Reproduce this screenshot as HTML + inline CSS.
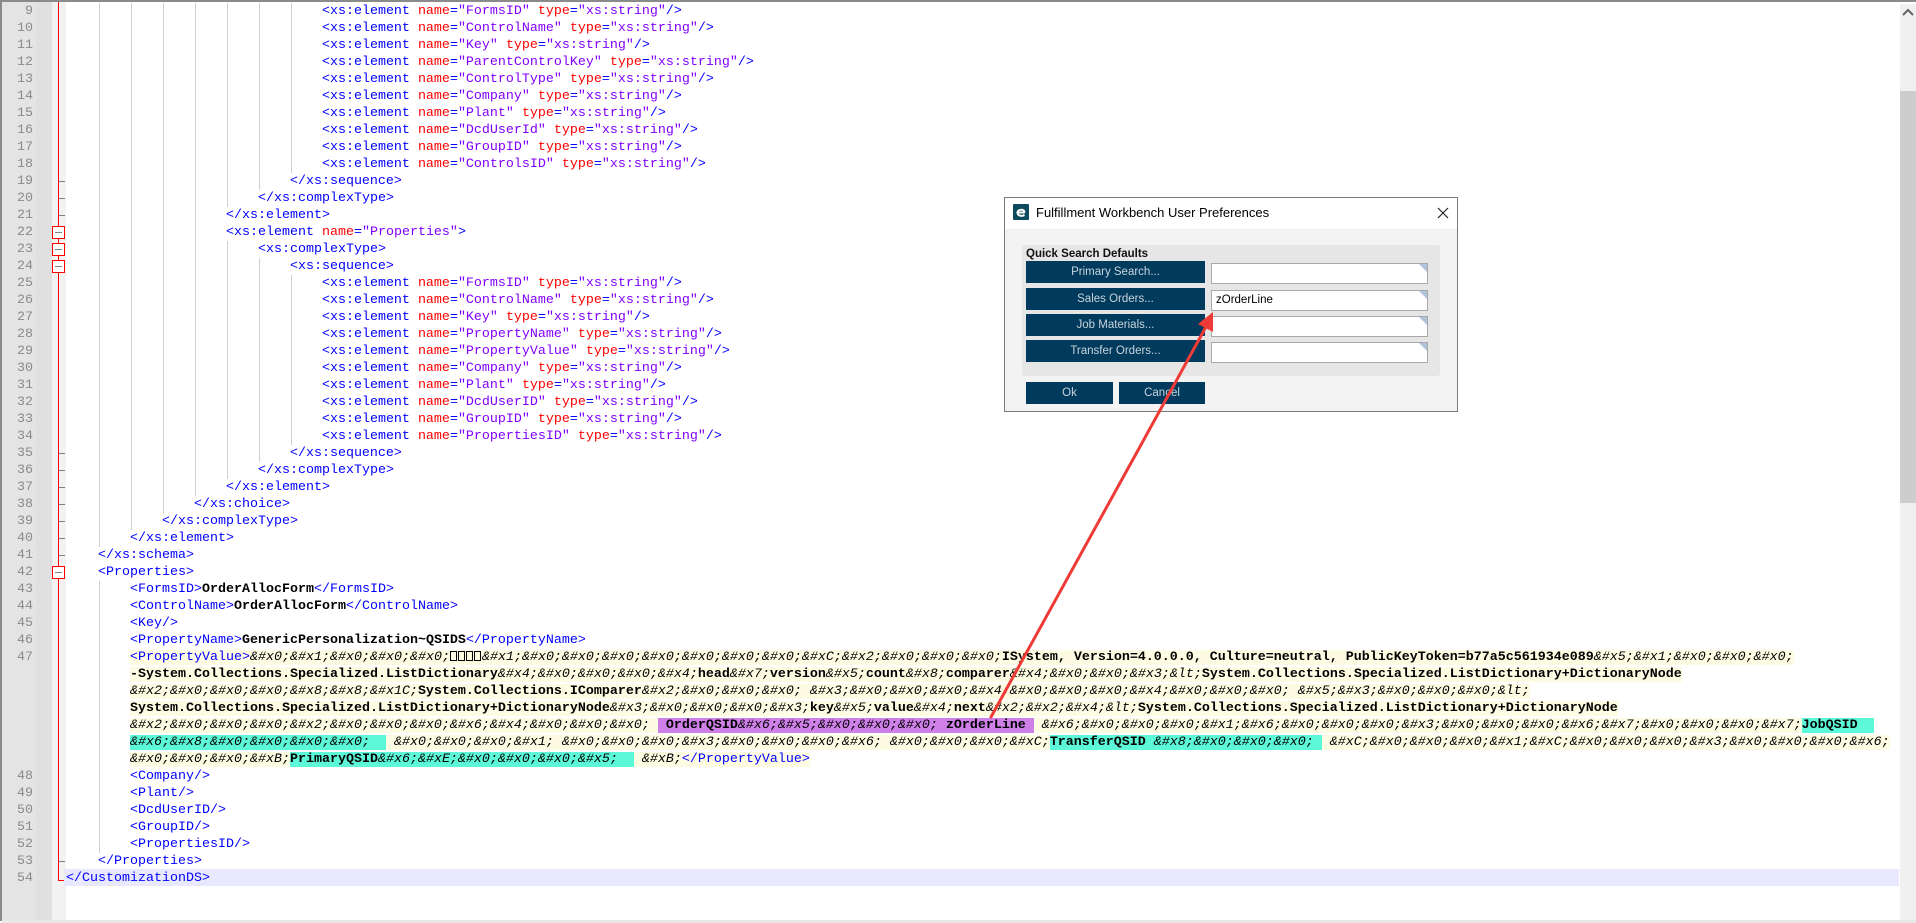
<!DOCTYPE html>
<html><head><meta charset="utf-8">
<style>
*{margin:0;padding:0;box-sizing:border-box}
html,body{width:1916px;height:921px;overflow:hidden;background:#fff}
#ed{position:absolute;left:0;top:0;width:1916px;height:921px;border-top:2px solid #8a8a8a;border-left:2px solid #8a8a8a;background:#fff}
.g1{position:absolute;left:0;top:0;width:34px;height:918px;background:#e4e4e4}
.g2{position:absolute;left:34px;top:0;width:16px;height:918px;background:#e0e0e0}
.g3{position:absolute;left:50px;top:0;width:14px;height:918px;background:#f2f2f2}
.bot{position:absolute;left:0;top:918px;width:1916px;height:3px;background:#e8e8e8}
.rl{position:absolute;left:56px;top:0;width:1px;height:879px;background:#f00}
.rlh{position:absolute;left:56px;top:878px;width:8px;height:1px;background:#f00}
.row{position:absolute;left:0;height:17px;width:1897px;font-family:"Liberation Mono",monospace;font-size:13.33px;line-height:17px;white-space:pre}
.ln{position:absolute;left:0;width:31px;text-align:right;color:#8a8a8a;font-family:"Liberation Mono",monospace}
.tx{position:absolute;left:64px;top:0}
.gd{position:absolute;left:96px;top:0;height:17px;background:repeating-linear-gradient(to right,#d0d0d0 0 1px,transparent 1px 32px);background-position:1px 0}
.tk{position:absolute;left:57px;top:8px;width:6px;height:1px;background:#808080}
.bx{position:absolute;left:50px;top:2px;width:13px;height:13px;border:1px solid #f00;background:#fff}
.bx:after{content:"";position:absolute;left:2px;top:5px;width:7px;height:1px;background:#808080}
.t{color:#0000ff}.a{color:#ff0000}.v{color:#8000ff}.b{color:#000;font-weight:bold}
.e{color:#000;font-style:italic}
.y{background:#fefbe3}
.p{background:#cf7fe8}.c{background:#5cf8d8}
.sq{display:inline-block;width:7px;height:10px;border:1px solid #000;margin-right:1px;vertical-align:-1px}
.sb{position:absolute;left:1898px;top:2px;width:16px;height:916px;background:#f0f0f0}
.th{position:absolute;left:1898px;top:89px;width:16px;height:412px;background:#cdcdcd}
.cur{background:#e8e8ff}
#dlg{position:absolute;left:1004px;top:197px;width:454px;height:215px;border:1px solid #7a7a7a;background:#f3f3f4;font-family:"Liberation Sans",sans-serif}
#tb{position:absolute;left:0;top:0;width:452px;height:31px;background:#fff}
#ic{position:absolute;left:8px;top:6px;width:16px;height:16px;background:#0d4a5e;border-radius:1px}
#tt{position:absolute;left:31px;top:7px;font-size:13px;color:#000}
#grp{position:absolute;left:17px;top:47px;width:418px;height:131px;background:#e6e6e6;border-radius:3px}
#gl{position:absolute;left:4px;top:3px;font-size:11.5px;font-weight:bold;color:#111}
.btn{position:absolute;height:22px;background:#003a5c;color:#c8d4dc;font-size:11.5px;text-align:center;line-height:22px}
.in{position:absolute;height:21px;width:217px;background:#fff;border:1px solid #a8a8a8;font-size:11.5px;line-height:19px;padding-left:4px;color:#000}
.in:after{content:"";position:absolute;right:0;top:0;border-top:8px solid #b0c4de;border-left:8px solid transparent}
</style></head><body>
<div id="ed">
<div class="g1"></div><div class="g2"></div><div class="g3"></div>
<div class="bot"></div>
<div class="rl"></div><div class="rlh"></div>
<div class="row cur" style="top:867px;left:62px;width:1835px;height:17px"></div>

<div class="row" style="top:1px"><span class="ln">9</span><span class="gd" style="width:224px"></span><span class="tx">                                <span class="t">&lt;xs:element </span><span class="a">name</span><span class="t">=</span><span class="v">"FormsID"</span> <span class="a">type</span><span class="t">=</span><span class="v">"xs:string"</span><span class="t">/&gt;</span></span></div>
<div class="row" style="top:18px"><span class="ln">10</span><span class="gd" style="width:224px"></span><span class="tx">                                <span class="t">&lt;xs:element </span><span class="a">name</span><span class="t">=</span><span class="v">"ControlName"</span> <span class="a">type</span><span class="t">=</span><span class="v">"xs:string"</span><span class="t">/&gt;</span></span></div>
<div class="row" style="top:35px"><span class="ln">11</span><span class="gd" style="width:224px"></span><span class="tx">                                <span class="t">&lt;xs:element </span><span class="a">name</span><span class="t">=</span><span class="v">"Key"</span> <span class="a">type</span><span class="t">=</span><span class="v">"xs:string"</span><span class="t">/&gt;</span></span></div>
<div class="row" style="top:52px"><span class="ln">12</span><span class="gd" style="width:224px"></span><span class="tx">                                <span class="t">&lt;xs:element </span><span class="a">name</span><span class="t">=</span><span class="v">"ParentControlKey"</span> <span class="a">type</span><span class="t">=</span><span class="v">"xs:string"</span><span class="t">/&gt;</span></span></div>
<div class="row" style="top:69px"><span class="ln">13</span><span class="gd" style="width:224px"></span><span class="tx">                                <span class="t">&lt;xs:element </span><span class="a">name</span><span class="t">=</span><span class="v">"ControlType"</span> <span class="a">type</span><span class="t">=</span><span class="v">"xs:string"</span><span class="t">/&gt;</span></span></div>
<div class="row" style="top:86px"><span class="ln">14</span><span class="gd" style="width:224px"></span><span class="tx">                                <span class="t">&lt;xs:element </span><span class="a">name</span><span class="t">=</span><span class="v">"Company"</span> <span class="a">type</span><span class="t">=</span><span class="v">"xs:string"</span><span class="t">/&gt;</span></span></div>
<div class="row" style="top:103px"><span class="ln">15</span><span class="gd" style="width:224px"></span><span class="tx">                                <span class="t">&lt;xs:element </span><span class="a">name</span><span class="t">=</span><span class="v">"Plant"</span> <span class="a">type</span><span class="t">=</span><span class="v">"xs:string"</span><span class="t">/&gt;</span></span></div>
<div class="row" style="top:120px"><span class="ln">16</span><span class="gd" style="width:224px"></span><span class="tx">                                <span class="t">&lt;xs:element </span><span class="a">name</span><span class="t">=</span><span class="v">"DcdUserId"</span> <span class="a">type</span><span class="t">=</span><span class="v">"xs:string"</span><span class="t">/&gt;</span></span></div>
<div class="row" style="top:137px"><span class="ln">17</span><span class="gd" style="width:224px"></span><span class="tx">                                <span class="t">&lt;xs:element </span><span class="a">name</span><span class="t">=</span><span class="v">"GroupID"</span> <span class="a">type</span><span class="t">=</span><span class="v">"xs:string"</span><span class="t">/&gt;</span></span></div>
<div class="row" style="top:154px"><span class="ln">18</span><span class="gd" style="width:224px"></span><span class="tx">                                <span class="t">&lt;xs:element </span><span class="a">name</span><span class="t">=</span><span class="v">"ControlsID"</span> <span class="a">type</span><span class="t">=</span><span class="v">"xs:string"</span><span class="t">/&gt;</span></span></div>
<div class="row" style="top:171px"><span class="ln">19</span><span class="tk"></span><span class="gd" style="width:192px"></span><span class="tx">                            <span class="t">&lt;/xs:sequence&gt;</span></span></div>
<div class="row" style="top:188px"><span class="ln">20</span><span class="tk"></span><span class="gd" style="width:160px"></span><span class="tx">                        <span class="t">&lt;/xs:complexType&gt;</span></span></div>
<div class="row" style="top:205px"><span class="ln">21</span><span class="tk"></span><span class="gd" style="width:128px"></span><span class="tx">                    <span class="t">&lt;/xs:element&gt;</span></span></div>
<div class="row" style="top:222px"><span class="ln">22</span><span class="bx"></span><span class="gd" style="width:128px"></span><span class="tx">                    <span class="t">&lt;xs:element </span><span class="a">name</span><span class="t">=</span><span class="v">"Properties"</span><span class="t">&gt;</span></span></div>
<div class="row" style="top:239px"><span class="ln">23</span><span class="bx"></span><span class="gd" style="width:160px"></span><span class="tx">                        <span class="t">&lt;xs:complexType&gt;</span></span></div>
<div class="row" style="top:256px"><span class="ln">24</span><span class="bx"></span><span class="gd" style="width:192px"></span><span class="tx">                            <span class="t">&lt;xs:sequence&gt;</span></span></div>
<div class="row" style="top:273px"><span class="ln">25</span><span class="gd" style="width:224px"></span><span class="tx">                                <span class="t">&lt;xs:element </span><span class="a">name</span><span class="t">=</span><span class="v">"FormsID"</span> <span class="a">type</span><span class="t">=</span><span class="v">"xs:string"</span><span class="t">/&gt;</span></span></div>
<div class="row" style="top:290px"><span class="ln">26</span><span class="gd" style="width:224px"></span><span class="tx">                                <span class="t">&lt;xs:element </span><span class="a">name</span><span class="t">=</span><span class="v">"ControlName"</span> <span class="a">type</span><span class="t">=</span><span class="v">"xs:string"</span><span class="t">/&gt;</span></span></div>
<div class="row" style="top:307px"><span class="ln">27</span><span class="gd" style="width:224px"></span><span class="tx">                                <span class="t">&lt;xs:element </span><span class="a">name</span><span class="t">=</span><span class="v">"Key"</span> <span class="a">type</span><span class="t">=</span><span class="v">"xs:string"</span><span class="t">/&gt;</span></span></div>
<div class="row" style="top:324px"><span class="ln">28</span><span class="gd" style="width:224px"></span><span class="tx">                                <span class="t">&lt;xs:element </span><span class="a">name</span><span class="t">=</span><span class="v">"PropertyName"</span> <span class="a">type</span><span class="t">=</span><span class="v">"xs:string"</span><span class="t">/&gt;</span></span></div>
<div class="row" style="top:341px"><span class="ln">29</span><span class="gd" style="width:224px"></span><span class="tx">                                <span class="t">&lt;xs:element </span><span class="a">name</span><span class="t">=</span><span class="v">"PropertyValue"</span> <span class="a">type</span><span class="t">=</span><span class="v">"xs:string"</span><span class="t">/&gt;</span></span></div>
<div class="row" style="top:358px"><span class="ln">30</span><span class="gd" style="width:224px"></span><span class="tx">                                <span class="t">&lt;xs:element </span><span class="a">name</span><span class="t">=</span><span class="v">"Company"</span> <span class="a">type</span><span class="t">=</span><span class="v">"xs:string"</span><span class="t">/&gt;</span></span></div>
<div class="row" style="top:375px"><span class="ln">31</span><span class="gd" style="width:224px"></span><span class="tx">                                <span class="t">&lt;xs:element </span><span class="a">name</span><span class="t">=</span><span class="v">"Plant"</span> <span class="a">type</span><span class="t">=</span><span class="v">"xs:string"</span><span class="t">/&gt;</span></span></div>
<div class="row" style="top:392px"><span class="ln">32</span><span class="gd" style="width:224px"></span><span class="tx">                                <span class="t">&lt;xs:element </span><span class="a">name</span><span class="t">=</span><span class="v">"DcdUserID"</span> <span class="a">type</span><span class="t">=</span><span class="v">"xs:string"</span><span class="t">/&gt;</span></span></div>
<div class="row" style="top:409px"><span class="ln">33</span><span class="gd" style="width:224px"></span><span class="tx">                                <span class="t">&lt;xs:element </span><span class="a">name</span><span class="t">=</span><span class="v">"GroupID"</span> <span class="a">type</span><span class="t">=</span><span class="v">"xs:string"</span><span class="t">/&gt;</span></span></div>
<div class="row" style="top:426px"><span class="ln">34</span><span class="gd" style="width:224px"></span><span class="tx">                                <span class="t">&lt;xs:element </span><span class="a">name</span><span class="t">=</span><span class="v">"PropertiesID"</span> <span class="a">type</span><span class="t">=</span><span class="v">"xs:string"</span><span class="t">/&gt;</span></span></div>
<div class="row" style="top:443px"><span class="ln">35</span><span class="tk"></span><span class="gd" style="width:192px"></span><span class="tx">                            <span class="t">&lt;/xs:sequence&gt;</span></span></div>
<div class="row" style="top:460px"><span class="ln">36</span><span class="tk"></span><span class="gd" style="width:160px"></span><span class="tx">                        <span class="t">&lt;/xs:complexType&gt;</span></span></div>
<div class="row" style="top:477px"><span class="ln">37</span><span class="tk"></span><span class="gd" style="width:128px"></span><span class="tx">                    <span class="t">&lt;/xs:element&gt;</span></span></div>
<div class="row" style="top:494px"><span class="ln">38</span><span class="tk"></span><span class="gd" style="width:96px"></span><span class="tx">                <span class="t">&lt;/xs:choice&gt;</span></span></div>
<div class="row" style="top:511px"><span class="ln">39</span><span class="tk"></span><span class="gd" style="width:64px"></span><span class="tx">            <span class="t">&lt;/xs:complexType&gt;</span></span></div>
<div class="row" style="top:528px"><span class="ln">40</span><span class="tk"></span><span class="gd" style="width:32px"></span><span class="tx">        <span class="t">&lt;/xs:element&gt;</span></span></div>
<div class="row" style="top:545px"><span class="ln">41</span><span class="tk"></span><span class="tx">    <span class="t">&lt;/xs:schema&gt;</span></span></div>
<div class="row" style="top:562px"><span class="ln">42</span><span class="bx"></span><span class="tx">    <span class="t">&lt;Properties&gt;</span></span></div>
<div class="row" style="top:579px"><span class="ln">43</span><span class="gd" style="width:32px"></span><span class="tx">        <span class="t">&lt;FormsID&gt;</span><span class="b">OrderAllocForm</span><span class="t">&lt;/FormsID&gt;</span></span></div>
<div class="row" style="top:596px"><span class="ln">44</span><span class="gd" style="width:32px"></span><span class="tx">        <span class="t">&lt;ControlName&gt;</span><span class="b">OrderAllocForm</span><span class="t">&lt;/ControlName&gt;</span></span></div>
<div class="row" style="top:613px"><span class="ln">45</span><span class="gd" style="width:32px"></span><span class="tx">        <span class="t">&lt;Key/&gt;</span></span></div>
<div class="row" style="top:630px"><span class="ln">46</span><span class="gd" style="width:32px"></span><span class="tx">        <span class="t">&lt;PropertyName&gt;</span><span class="b">GenericPersonalization~QSIDS</span><span class="t">&lt;/PropertyName&gt;</span></span></div>
<div class="row" style="top:647px"><span class="ln">47</span><span class="gd" style="width:32px"></span><span class="tx">        <span class="y"><span class="t">&lt;PropertyValue&gt;</span><span class="e">&amp;#x0;&amp;#x1;&amp;#x0;&amp;#x0;&amp;#x0;</span><span class="sq"></span><span class="sq"></span><span class="sq"></span><span class="sq"></span><span class="e">&amp;#x1;&amp;#x0;&amp;#x0;&amp;#x0;&amp;#x0;&amp;#x0;&amp;#x0;&amp;#x0;&amp;#xC;&amp;#x2;&amp;#x0;&amp;#x0;&amp;#x0;</span><span class="b">ISystem, Version=4.0.0.0, Culture=neutral, PublicKeyToken=b77a5c561934e089</span><span class="e">&amp;#x5;&amp;#x1;&amp;#x0;&amp;#x0;&amp;#x0;</span></span></span></div>
<div class="row" style="top:664px"><span class="gd" style="width:32px"></span><span class="tx">        <span class="y"><span class="b">-System.Collections.Specialized.ListDictionary</span><span class="e">&amp;#x4;&amp;#x0;&amp;#x0;&amp;#x0;&amp;#x4;</span><span class="b">head</span><span class="e">&amp;#x7;</span><span class="b">version</span><span class="e">&amp;#x5;</span><span class="b">count</span><span class="e">&amp;#x8;</span><span class="b">comparer</span><span class="e">&amp;#x4;&amp;#x0;&amp;#x0;&amp;#x3;&amp;lt;</span><span class="b">System.Collections.Specialized.ListDictionary+DictionaryNode</span></span></span></div>
<div class="row" style="top:681px"><span class="gd" style="width:32px"></span><span class="tx">        <span class="y"><span class="e">&amp;#x2;&amp;#x0;&amp;#x0;&amp;#x0;&amp;#x8;&amp;#x8;&amp;#x1C;</span><span class="b">System.Collections.IComparer</span><span class="e">&amp;#x2;&amp;#x0;&amp;#x0;&amp;#x0; &amp;#x3;&amp;#x0;&amp;#x0;&amp;#x0;&amp;#x4;&amp;#x0;&amp;#x0;&amp;#x0;&amp;#x4;&amp;#x0;&amp;#x0;&amp;#x0; &amp;#x5;&amp;#x3;&amp;#x0;&amp;#x0;&amp;#x0;&amp;lt;</span></span></span></div>
<div class="row" style="top:698px"><span class="gd" style="width:32px"></span><span class="tx">        <span class="y"><span class="b">System.Collections.Specialized.ListDictionary+DictionaryNode</span><span class="e">&amp;#x3;&amp;#x0;&amp;#x0;&amp;#x0;&amp;#x3;</span><span class="b">key</span><span class="e">&amp;#x5;</span><span class="b">value</span><span class="e">&amp;#x4;</span><span class="b">next</span><span class="e">&amp;#x2;&amp;#x2;&amp;#x4;&amp;lt;</span><span class="b">System.Collections.Specialized.ListDictionary+DictionaryNode</span></span></span></div>
<div class="row" style="top:715px"><span class="gd" style="width:32px"></span><span class="tx">        <span class="y"><span class="e">&amp;#x2;&amp;#x0;&amp;#x0;&amp;#x0;&amp;#x2;&amp;#x0;&amp;#x0;&amp;#x0;&amp;#x6;&amp;#x4;&amp;#x0;&amp;#x0;&amp;#x0; </span><span class="p"><span class="b"> OrderQSID</span><span class="e">&amp;#x6;&amp;#x5;&amp;#x0;&amp;#x0;&amp;#x0; </span><span class="b">zOrderLine </span></span><span class="e"> &amp;#x6;&amp;#x0;&amp;#x0;&amp;#x0;&amp;#x1;&amp;#x6;&amp;#x0;&amp;#x0;&amp;#x0;&amp;#x3;&amp;#x0;&amp;#x0;&amp;#x0;&amp;#x6;&amp;#x7;&amp;#x0;&amp;#x0;&amp;#x0;&amp;#x7;</span><span class="c"><span class="b">JobQSID  </span></span></span></span></div>
<div class="row" style="top:732px"><span class="gd" style="width:32px"></span><span class="tx">        <span class="y"><span class="c"><span class="e">&amp;#x6;&amp;#x8;&amp;#x0;&amp;#x0;&amp;#x0;&amp;#x0;  </span></span><span class="e"> &amp;#x0;&amp;#x0;&amp;#x0;&amp;#x1; &amp;#x0;&amp;#x0;&amp;#x0;&amp;#x3;&amp;#x0;&amp;#x0;&amp;#x0;&amp;#x6; &amp;#x0;&amp;#x0;&amp;#x0;&amp;#xC;</span><span class="c"><span class="b">TransferQSID </span><span class="e">&amp;#x8;&amp;#x0;&amp;#x0;&amp;#x0; </span></span><span class="e"> &amp;#xC;&amp;#x0;&amp;#x0;&amp;#x0;&amp;#x1;&amp;#xC;&amp;#x0;&amp;#x0;&amp;#x0;&amp;#x3;&amp;#x0;&amp;#x0;&amp;#x0;&amp;#x6;</span></span></span></div>
<div class="row" style="top:749px"><span class="gd" style="width:32px"></span><span class="tx">        <span class="y"><span class="e">&amp;#x0;&amp;#x0;&amp;#x0;&amp;#xB;</span><span class="c"><span class="b">PrimaryQSID</span><span class="e">&amp;#x6;&amp;#xE;&amp;#x0;&amp;#x0;&amp;#x0;&amp;#x5;  </span></span><span class="e"> &amp;#xB;</span><span class="t">&lt;/PropertyValue&gt;</span></span></span></div>
<div class="row" style="top:766px"><span class="ln">48</span><span class="gd" style="width:32px"></span><span class="tx">        <span class="t">&lt;Company/&gt;</span></span></div>
<div class="row" style="top:783px"><span class="ln">49</span><span class="gd" style="width:32px"></span><span class="tx">        <span class="t">&lt;Plant/&gt;</span></span></div>
<div class="row" style="top:800px"><span class="ln">50</span><span class="gd" style="width:32px"></span><span class="tx">        <span class="t">&lt;DcdUserID/&gt;</span></span></div>
<div class="row" style="top:817px"><span class="ln">51</span><span class="gd" style="width:32px"></span><span class="tx">        <span class="t">&lt;GroupID/&gt;</span></span></div>
<div class="row" style="top:834px"><span class="ln">52</span><span class="gd" style="width:32px"></span><span class="tx">        <span class="t">&lt;PropertiesID/&gt;</span></span></div>
<div class="row" style="top:851px"><span class="ln">53</span><span class="tk"></span><span class="tx">    <span class="t">&lt;/Properties&gt;</span></span></div>
<div class="row" style="top:868px"><span class="ln">54</span><span class="tx"><span class="t">&lt;/CustomizationDS&gt;</span></span></div>

<div class="sb"></div><div class="th"></div>
<svg style="position:absolute;left:1900px;top:6px" width="12" height="10"><path d="M1 7 L6 2 L11 7" fill="none" stroke="#606060" stroke-width="2"/></svg>
</div>

<div id="dlg">
<div id="tb">
<div id="ic"><svg width="16" height="16"><path d="M12 8.5H4.5M4.5 8.5C4.5 5 11.5 5 11.5 8M4.5 8.5C4.5 12 9 12.5 11.5 11" fill="none" stroke="#fff" stroke-width="2"/></svg></div>
<div id="tt">Fulfillment Workbench User Preferences</div>
<svg style="position:absolute;left:432px;top:9px" width="12" height="12"><path d="M1 1L11 11M11 1L1 11" stroke="#222" stroke-width="1.2"/></svg>
</div>
<div id="grp"><div id="gl">Quick Search Defaults</div></div>
<div class="btn" style="left:21px;top:63px;width:179px">Primary Search...</div>
<div class="btn" style="left:21px;top:90px;width:179px">Sales Orders...</div>
<div class="btn" style="left:21px;top:116px;width:179px">Job Materials...</div>
<div class="btn" style="left:21px;top:142px;width:179px">Transfer Orders...</div>
<div class="in" style="left:206px;top:65px"></div>
<div class="in" style="left:206px;top:92px">zOrderLine</div>
<div class="in" style="left:206px;top:118px"></div>
<div class="in" style="left:206px;top:144px"></div>
<div class="btn" style="left:21px;top:184px;width:87px">Ok</div>
<div class="btn" style="left:114px;top:184px;width:86px">Cancel</div>
</div>

<svg style="position:absolute;left:0;top:0" width="1916" height="921">
<line x1="991" y1="717" x2="1207" y2="325" stroke="#ee3b37" stroke-width="3" stroke-linecap="round"/>
<path d="M1213 312 L1213 332 L1198 324 Z" fill="#ee3b37"/>
</svg>
</body></html>
